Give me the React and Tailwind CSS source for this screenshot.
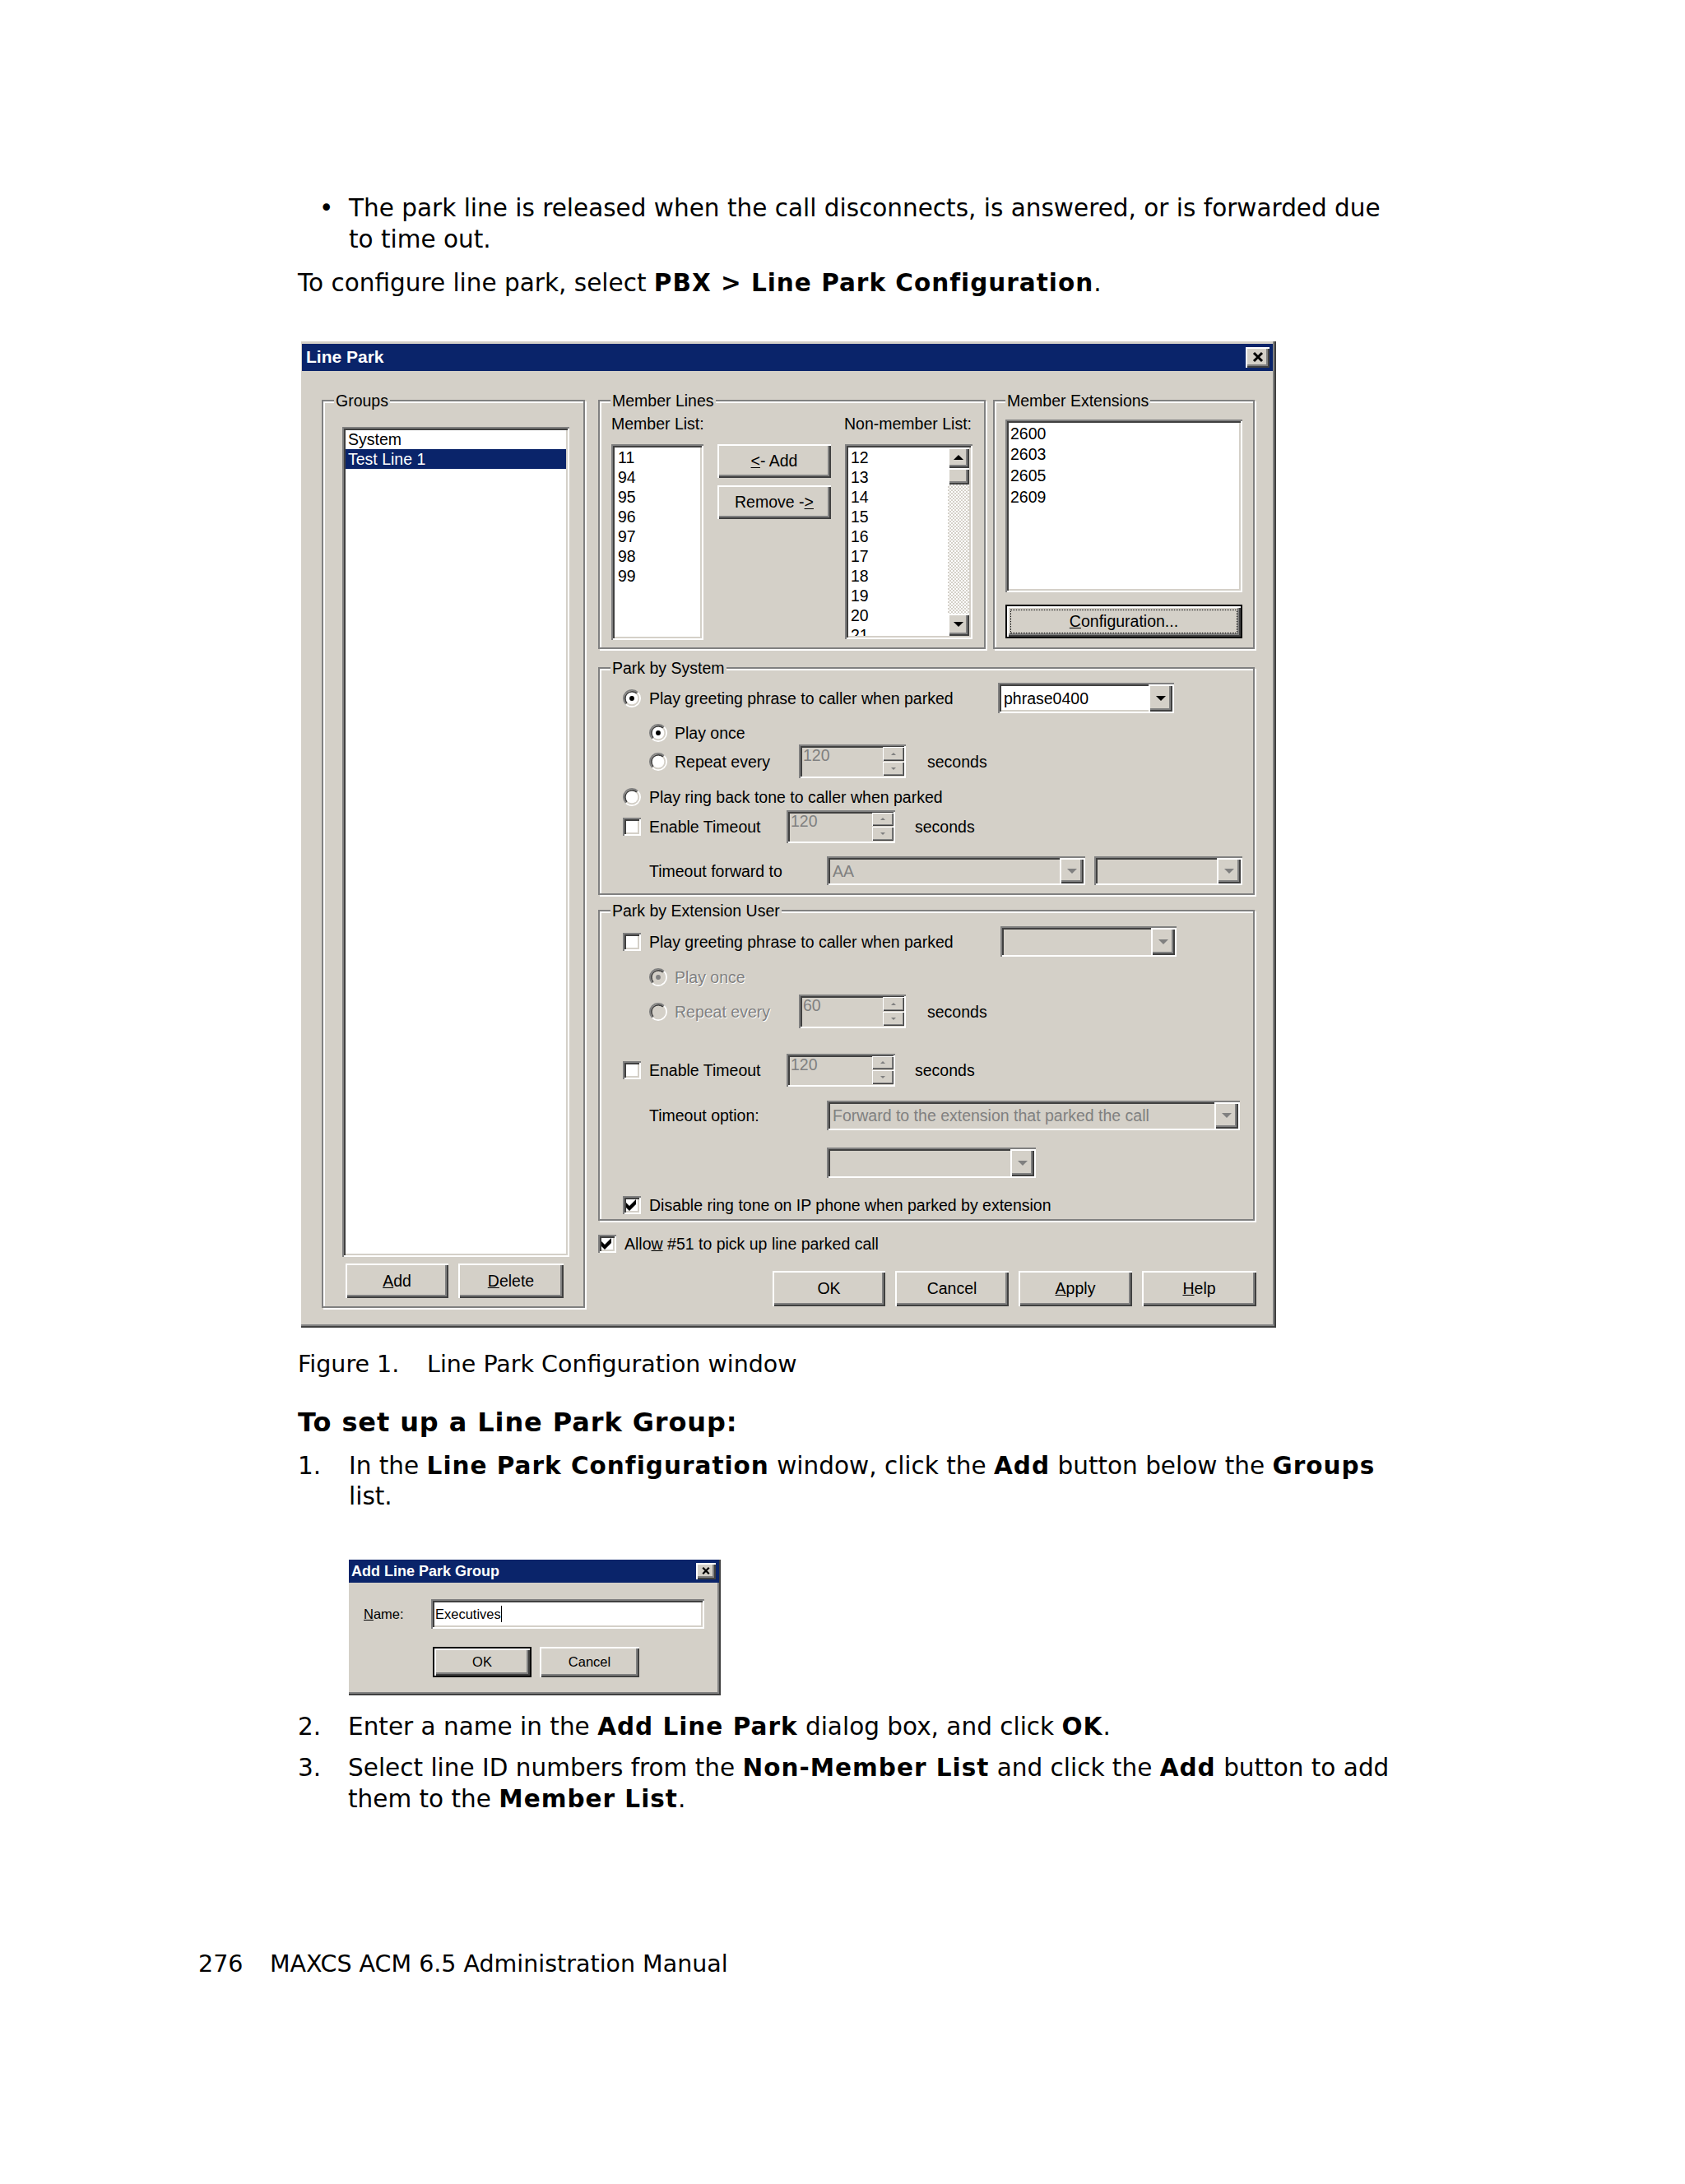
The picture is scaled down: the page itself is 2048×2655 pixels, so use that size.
import React from "react";

// Win2000-style bevels, scaled up ~1.85x like the screenshot
const RAISED = "shadow-[inset_2px_2px_0_#ffffff,inset_-2px_-2px_0_#404040,inset_-4px_-4px_0_#808080]";
const RAISED_SM = "shadow-[inset_1px_1px_0_#ffffff,inset_-1px_-1px_0_#404040,inset_-2px_-2px_0_#808080]";
const SUNKEN = "shadow-[inset_2px_2px_0_#808080,inset_-2px_-2px_0_#ffffff,inset_4px_4px_0_#404040,inset_-4px_-4px_0_#d4d0c8]";
const ETCHED = "border-2 border-[#808080] shadow-[inset_2px_2px_0_#ffffff,2px_2px_0_#ffffff]";
const DIM = "text-[#808080] [text-shadow:1px_1px_0_#ffffff]";

const memberLines = ["11", "94", "95", "96", "97", "98", "99"];
const nonMemberLines = ["12", "13", "14", "15", "16", "17", "18", "19", "20", "21"];
const extensions = ["2600", "2603", "2605", "2609"];

function Btn({ className = "", children }) {
  return (
    <div className={`flex shrink-0 items-center justify-center bg-[#d4d0c8] ${RAISED} ${className}`}>
      {children}
    </div>
  );
}

function DefaultBtn({ className = "", focus, children }) {
  return (
    <div className={`shrink-0 border-2 border-black ${className}`}>
      <div className={`h-full w-full bg-[#d4d0c8] p-[4px] ${RAISED}`}>
        <div className={`flex h-full w-full items-center justify-center ${focus ? "border border-dotted border-black" : ""}`}>
          {children}
        </div>
      </div>
    </div>
  );
}

function CloseX({ w = 16, h = 14 }) {
  return (
    <svg width={w} height={h} viewBox="0 0 16 14">
      <path d="M3 2 L13 12 M13 2 L3 12" stroke="#000" strokeWidth="3" />
    </svg>
  );
}

function Radio({ checked, disabled }) {
  return (
    <svg width="22" height="22" viewBox="0 0 12 12" className="shrink-0">
      <path d="M2.11 9.89A5.5 5.5 0 0 1 9.89 2.11" fill="none" stroke="#808080" />
      <path d="M9.89 2.11A5.5 5.5 0 0 1 2.11 9.89" fill="none" stroke="#ffffff" />
      <path d="M2.82 9.18A4.5 4.5 0 0 1 9.18 2.82" fill="none" stroke="#404040" />
      <path d="M9.18 2.82A4.5 4.5 0 0 1 2.82 9.18" fill="none" stroke="#d4d0c8" />
      <circle cx="6" cy="6" r="4" fill={disabled ? "#d4d0c8" : "#ffffff"} />
      {checked && <circle cx="6" cy="6" r="1.6" fill={disabled ? "#808080" : "#000000"} />}
    </svg>
  );
}

function Check({ checked }) {
  return (
    <div className={`flex h-[22px] w-[22px] shrink-0 items-center justify-center bg-white ${SUNKEN}`}>
      {checked && (
        <svg width="14" height="14" viewBox="0 0 7 7">
          <polygon points="0,2 2,4 6,0 6,3 2,7 0,5" fill="#000" />
        </svg>
      )}
    </div>
  );
}

function Spin({ value, className = "" }) {
  return (
    <div className={`flex shrink-0 bg-[#d4d0c8] p-[2px] ${SUNKEN} ${className}`}>
      <span className="flex-1 pl-[3px] pt-[1px] leading-[20px] text-[#808080]">{value}</span>
      <div className="flex w-[26px] flex-col gap-[1px] py-[1px]">
        <div className={`flex flex-1 items-center justify-center bg-[#d4d0c8] ${RAISED_SM}`}>
          <svg width="6" height="3"><polygon points="3,0 6,3 0,3" fill="#808080" /></svg>
        </div>
        <div className={`flex flex-1 items-center justify-center bg-[#d4d0c8] ${RAISED_SM}`}>
          <svg width="6" height="3"><polygon points="0,0 6,0 3,3" fill="#808080" /></svg>
        </div>
      </div>
    </div>
  );
}

function Combo({ text = "", disabled, className = "" }) {
  return (
    <div className={`flex shrink-0 items-center p-[2px] ${SUNKEN} ${disabled ? "bg-[#d4d0c8]" : "bg-white"} ${className}`}>
      <span className={`flex-1 truncate pl-[5px] ${disabled ? "text-[#808080]" : "text-black"}`}>{text}</span>
      <div className={`flex h-full w-[29px] items-center justify-center bg-[#d4d0c8] ${RAISED}`}>
        <svg width="12" height="6"><polygon points="0,0 12,0 6,6" fill={disabled ? "#808080" : "#000000"} /></svg>
      </div>
    </div>
  );
}

function Group({ label, className = "", children }) {
  return (
    <div className={`relative shrink-0 ${ETCHED} ${className}`}>
      <span className="absolute -top-[12px] left-[13px] bg-[#d4d0c8] px-[2px] leading-[22px]">{label}</span>
      {children}
    </div>
  );
}

function LineParkDialog() {
  return (
    <div className={`ml-[2px] mt-[49px] h-[1201px] w-[1187px] bg-[#d4d0c8] pl-[3px] pr-[4px] pt-[5px] font-['Liberation_Sans',Arial,sans-serif] text-[19.5px] leading-[24px] text-black ${RAISED}`}>
      <div className="flex h-[33px] items-center justify-between bg-[#0a246a] pl-[5px] pr-[4px]">
        <span className="text-[21px] font-bold text-white">Line Park</span>
        <Btn className="h-[25px] w-[29px]"><CloseX /></Btn>
      </div>

      <div className="mt-[35px] flex pl-[24px]">
        {/* Groups */}
        <Group label="Groups" className="h-[1104px] w-[320px]">
          <div className="pl-[23px] pt-[31px]">
            <div className={`h-[1009px] w-[276px] bg-white px-[4px] pt-[3px] ${SUNKEN}`}>
              <div className="h-[24px] pl-[3px]">System</div>
              <div className="h-[24px] bg-[#0a246a] pl-[3px] text-white">Test Line 1</div>
            </div>
            <div className="ml-[4px] mt-[8px] flex gap-[12px]">
              <Btn className="h-[42px] w-[125px]"><span><u>A</u>dd</span></Btn>
              <Btn className="h-[42px] w-[128px]"><span><u>D</u>elete</span></Btn>
            </div>
          </div>
        </Group>

        <div className="ml-[16px] flex w-[800px] flex-col">
          <div className="flex h-[303px] gap-[9px]">
            {/* Member Lines */}
            <Group label="Member Lines" className="h-full w-[471px]">
              <div className="pl-[14px] pt-[15px]">
                <div className="flex h-[24px]">
                  <span className="w-[283px]">Member List:</span>
                  <span>Non-member List:</span>
                </div>
                <div className="mt-[13px] flex">
                  <div className={`h-[238px] w-[112px] bg-white px-[4px] pt-[4px] ${SUNKEN}`}>
                    {memberLines.map((n) => (
                      <div key={n} className="h-[24px] pl-[4px]">{n}</div>
                    ))}
                  </div>
                  <div className="ml-[17px] flex w-[138px] flex-col gap-[9px]">
                    <Btn className="h-[41px] w-full"><span><u>&lt;</u>- Add</span></Btn>
                    <Btn className="h-[41px] w-full"><span>Remove -<u>&gt;</u></span></Btn>
                  </div>
                  <div className={`ml-[17px] flex h-[237px] w-[155px] bg-white p-[4px] ${SUNKEN}`}>
                    <div className="flex-1 overflow-hidden pl-[3px]">
                      {nonMemberLines.map((n) => (
                        <div key={n} className="h-[24px]">{n}</div>
                      ))}
                    </div>
                    <div className="flex w-[26px] flex-col">
                      <Btn className="h-[25px] w-full">
                        <svg width="12" height="6"><polygon points="6,0 12,6 0,6" fill="#000" /></svg>
                      </Btn>
                      <Btn className="h-[20px] w-full" />
                      <div className="flex-1 bg-[repeating-conic-gradient(#d4d0c8_0%_25%,#ffffff_0%_50%)] bg-[length:4px_4px]" />
                      <Btn className="h-[27px] w-full">
                        <svg width="12" height="6"><polygon points="0,0 12,0 6,6" fill="#000" /></svg>
                      </Btn>
                    </div>
                  </div>
                </div>
              </div>
            </Group>

            {/* Member Extensions */}
            <Group label="Member Extensions" className="h-full w-[318px]">
              <div className="pl-[13px] pt-[22px]">
                <div className={`h-[210px] w-[288px] bg-white px-[4px] pt-[5px] ${SUNKEN}`}>
                  {extensions.map((n) => (
                    <div key={n} className="h-[25.7px] pl-[2px] leading-[25.7px]">{n}</div>
                  ))}
                </div>
                <DefaultBtn focus className="mt-[15px] h-[41px] w-[288px]">
                  <span><u>C</u>onfiguration...</span>
                </DefaultBtn>
              </div>
            </Group>
          </div>

          {/* Park by System */}
          <Group label="Park by System" className="mt-[22px] h-[277px] w-[798px]">
            <div className="flex flex-col">
              <div className="mt-[21px] flex h-[30px] items-center">
                <div className="flex w-[60px] justify-end pr-[10px]"><Radio checked /></div>
                <span className="w-[424px]">Play greeting phrase to caller when parked</span>
                <Combo text="phrase0400" className="h-[37px] w-[214px]" />
              </div>
              <div className="mt-[12px] flex h-[30px] items-center pl-[60px]">
                <Radio checked />
                <span className="ml-[9px]">Play once</span>
              </div>
              <div className="mt-[5px] flex h-[30px] items-center pl-[60px]">
                <Radio />
                <span className="ml-[9px] w-[151px]">Repeat every</span>
                <Spin value="120" className="h-[41px] w-[130px]" />
                <span className="ml-[26px]">seconds</span>
              </div>
              <div className="mt-[13px] flex h-[30px] items-center">
                <div className="flex w-[60px] justify-end pr-[10px]"><Radio /></div>
                <span>Play ring back tone to caller when parked</span>
              </div>
              <div className="mt-[6px] flex h-[30px] items-center">
                <div className="flex w-[60px] justify-end pr-[10px]"><Check /></div>
                <span className="w-[167px]">Enable Timeout</span>
                <Spin value="120" className="h-[40px] w-[132px]" />
                <span className="ml-[24px]">seconds</span>
              </div>
              <div className="mt-[24px] flex h-[30px] items-center pl-[60px]">
                <span className="w-[216px]">Timeout forward to</span>
                <Combo disabled text="AA" className="h-[35px] w-[314px]" />
                <Combo disabled className="ml-[11px] h-[35px] w-[180px]" />
              </div>
            </div>
          </Group>

          {/* Park by Extension User */}
          <Group label="Park by Extension User" className="mt-[18px] h-[378px] w-[798px]">
            <div className="flex flex-col">
              <div className="mt-[22px] flex h-[30px] items-center">
                <div className="flex w-[60px] justify-end pr-[10px]"><Check /></div>
                <span className="w-[427px]">Play greeting phrase to caller when parked</span>
                <Combo disabled className="h-[37px] w-[214px]" />
              </div>
              <div className="mt-[13px] flex h-[30px] items-center pl-[60px]">
                <Radio checked disabled />
                <span className={`ml-[9px] ${DIM}`}>Play once</span>
              </div>
              <div className="mt-[12px] flex h-[30px] items-center pl-[60px]">
                <Radio disabled />
                <span className={`ml-[9px] w-[151px] ${DIM}`}>Repeat every</span>
                <Spin value="60" className="h-[41px] w-[130px]" />
                <span className="ml-[26px]">seconds</span>
              </div>
              <div className="mt-[41px] flex h-[30px] items-center">
                <div className="flex w-[60px] justify-end pr-[10px]"><Check /></div>
                <span className="w-[167px]">Enable Timeout</span>
                <Spin value="120" className="h-[40px] w-[132px]" />
                <span className="ml-[24px]">seconds</span>
              </div>
              <div className="mt-[25px] flex h-[30px] items-center pl-[60px]">
                <span className="w-[216px]">Timeout option:</span>
                <Combo disabled text="Forward to the extension that parked the call" className="h-[36px] w-[502px]" />
              </div>
              <div className="mt-[28px] flex h-[30px] items-center pl-[276px]">
                <Combo disabled className="h-[37px] w-[254px]" />
              </div>
              <div className="mt-[21px] flex h-[30px] items-center">
                <div className="flex w-[60px] justify-end pr-[10px]"><Check checked /></div>
                <span>Disable ring tone on IP phone when parked by extension</span>
              </div>
            </div>
          </Group>

          <div className="mt-[16px] flex h-[24px] items-center">
            <Check checked />
            <span className="ml-[10px]">Allo<u>w</u> #51 to pick up line parked call</span>
          </div>

          <div className="mt-[21px] flex justify-end gap-[12px]">
            <Btn className="h-[43px] w-[137px]">OK</Btn>
            <Btn className="h-[43px] w-[138px]">Cancel</Btn>
            <Btn className="h-[43px] w-[138px]"><span><u>A</u>pply</span></Btn>
            <Btn className="h-[43px] w-[139px]"><span><u>H</u>elp</span></Btn>
          </div>
        </div>
      </div>
    </div>
  );
}

function AddGroupDialog() {
  return (
    <div className={`ml-[60px] mt-[55px] h-[167px] w-[454px] bg-[#d4d0c8] px-[2px] pt-[2px] font-['Liberation_Sans',Arial,sans-serif] text-[16.5px] leading-[20px] text-black ${RAISED}`}>
      <div className="flex h-[28px] items-center justify-between bg-[#0a246a] pl-[3px] pr-[4px]">
        <span className="text-[18px] font-bold text-white">Add Line Park Group</span>
        <Btn className="h-[20px] w-[24px]"><CloseX w={12} h={11} /></Btn>
      </div>
      <div className="mt-[20px] flex items-center pl-[18px]">
        <span className="w-[82px]"><u>N</u>ame:</span>
        <div className={`flex h-[36px] w-[332px] items-center bg-white pl-[5px] ${SUNKEN}`}>
          <span>Executives</span>
          <span className="h-[20px] w-[1px] bg-black" />
        </div>
      </div>
      <div className="ml-[102px] mt-[22px] flex gap-[10px]">
        <DefaultBtn className="h-[37px] w-[120px]">OK</DefaultBtn>
        <Btn className="h-[37px] w-[121px]">Cancel</Btn>
      </div>
    </div>
  );
}

export default function App() {
  return (
    <div className="min-h-[2655px] w-[2048px] bg-white pt-[235px] font-['DejaVu_Sans','Noto_Sans',sans-serif] text-[29.5px] leading-[37.5px] text-black [&_b]:tracking-[1px]">
      <div className="ml-[362px] w-[1400px] whitespace-nowrap">
        <div className="flex">
          <span className="ml-[26px] w-[36px]">•</span>
          <p>
            The park line is released when the call disconnects, is answered, or is forwarded due
            <br />
            to time out.
          </p>
        </div>
        <p className="mt-[16px]">
          To configure line park, select <b>PBX &gt; Line Park Configuration</b>.
        </p>

        <LineParkDialog />

        <div className="mt-[27px] flex text-[28.5px] leading-[36px]">
          <span className="w-[157px]">Figure 1.</span>
          <span>Line Park Configuration window</span>
        </div>

        <h2 className="mt-[32px] text-[32px] font-bold leading-[40px] tracking-[0.9px]">To set up a Line Park Group:</h2>

        <div className="mt-[15px] flex">
          <span className="w-[62px]">1.</span>
          <p>
            In the <b>Line Park Configuration</b> window, click the <b>Add</b> button below the <b>Groups</b>
            <br />
            list.
          </p>
        </div>

        <AddGroupDialog />

        <div className="mt-[20px] flex">
          <span className="w-[61px]">2.</span>
          <p>
            Enter a name in the <b>Add Line Park</b> dialog box, and click <b>OK</b>.
          </p>
        </div>
        <div className="mt-[13px] flex">
          <span className="w-[61px]">3.</span>
          <p>
            Select line ID numbers from the <b>Non-Member List</b> and click the <b>Add</b> button to add
            <br />
            them to the <b>Member List</b>.
          </p>
        </div>
      </div>

      <div className="ml-[241px] mt-[164px] flex whitespace-nowrap text-[28.5px] leading-[36px]">
        <span className="w-[87px]">276</span>
        <span>MAXCS ACM 6.5 Administration Manual</span>
      </div>
    </div>
  );
}
